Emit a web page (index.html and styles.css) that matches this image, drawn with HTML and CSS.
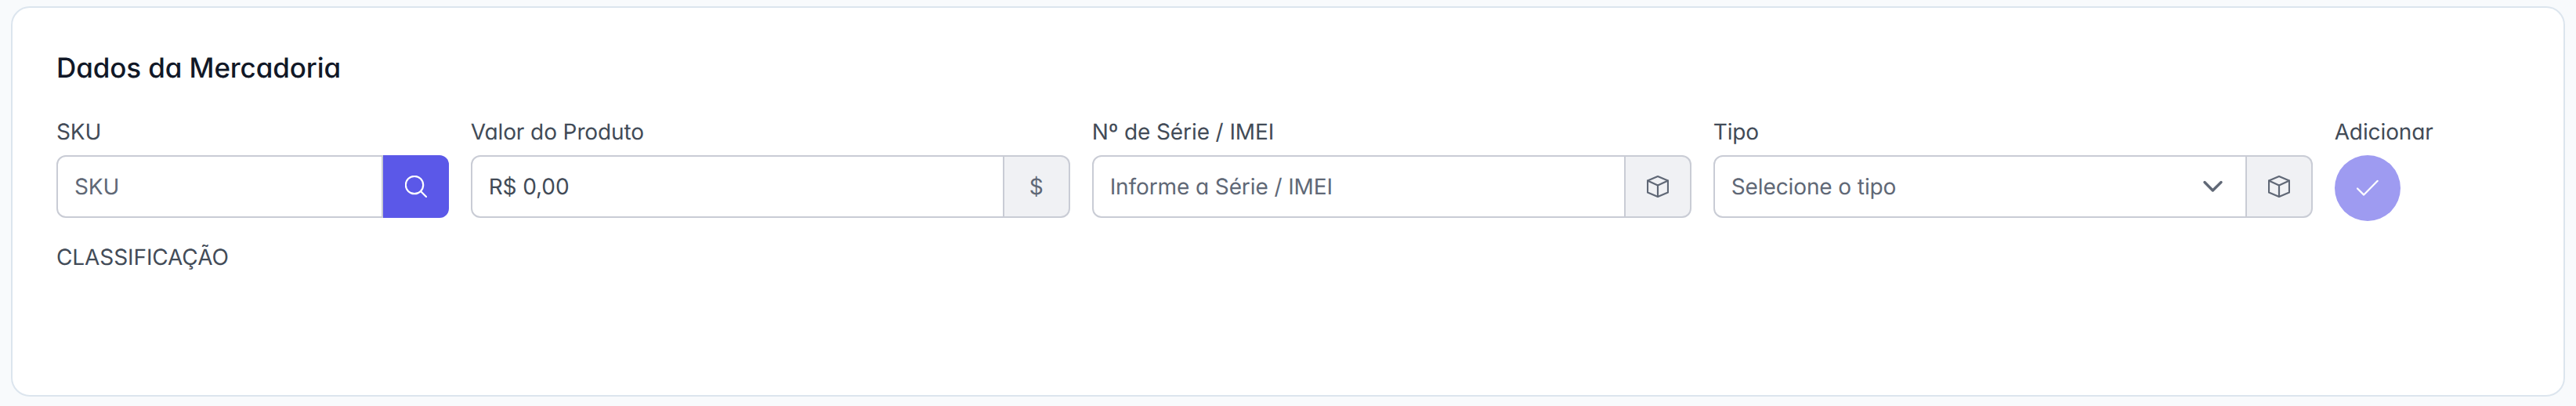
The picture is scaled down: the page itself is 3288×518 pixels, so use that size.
FILE: index.html
```html
<!DOCTYPE html>
<html lang="pt-BR">
<head>
    <meta charset="UTF-8">
    <title>Dados da Mercadoria</title>
    <link rel="stylesheet" href="styles.css">
</head>
<body>
    <div class="card">
        <h5 class="card-title">Dados da Mercadoria</h5>

        <div class="form-grid">
            <div class="field field-sm">
                <label for="sku">SKU</label>
                <div class="input-group">
                    <input type="text" id="sku" placeholder="SKU">
                    <button type="button" class="btn-search">
                        <svg class="icon" viewBox="0 0 28 28">
                            <circle cx="12" cy="12" r="11.2"/>
                            <path d="M20 20L27 27"/>
                        </svg>
                    </button>
                </div>
            </div>

            <div class="field">
                <label for="valor">Valor do Produto</label>
                <div class="input-group">
                    <input type="text" id="valor" value="R$ 0,00">
                    <span class="addon">$</span>
                </div>
            </div>

            <div class="field">
                <label for="serie">Nº de Série / IMEI</label>
                <div class="input-group">
                    <input type="text" id="serie" placeholder="Informe a Série / IMEI">
                    <span class="addon">
                        <svg class="icon" viewBox="0 0 28 28">
                            <path d="M14 1L27 6.6V21.4L14 27L1 21.4V6.6Z"/>
                            <path d="M1 6.6L14 12.4L27 6.6M14 12.4V27"/>
                        </svg>
                    </span>
                </div>
            </div>

            <div class="field">
                <label>Tipo</label>
                <div class="input-group">
                    <div class="dropdown">
                        <span class="dropdown-label">Selecione o tipo</span>
                        <svg class="icon chevron" viewBox="0 0 28 28">
                            <path d="M3 8.5L13.4 19L24 8.5"/>
                        </svg>
                    </div>
                    <span class="addon">
                        <svg class="icon" viewBox="0 0 28 28">
                            <path d="M14 1L27 6.6V21.4L14 27L1 21.4V6.6Z"/>
                            <path d="M1 6.6L14 12.4L27 6.6M14 12.4V27"/>
                        </svg>
                    </span>
                </div>
            </div>

            <div class="field field-btn">
                <label>Adicionar</label>
                <button type="button" class="btn-add" disabled>
                    <svg class="icon" viewBox="0 0 28 28">
                        <path d="M1 14.5L9.2 22.6L26.7 4.8"/>
                    </svg>
                </button>
            </div>
        </div>

        <div class="classification">CLASSIFICAÇÃO</div>
    </div>
</body>
</html>
```
FILE: styles.css
```css
* {
    box-sizing: border-box;
}
body {
    margin: 0;
    padding: 8px 14px 12px;
    height: 518px;
    background-color: #f8fafc;
    color: #424b57;
    font-family: Inter, "Liberation Sans", sans-serif;
    font-feature-settings: "cv11";
    font-size: 28px;
    line-height: 42px;
    letter-spacing: -0.1px;
    text-rendering: geometricPrecision;
}
.card {
    height: 498px;
    padding: 56px;
    background-color: #ffffff;
    border: 2px solid #dce5ee;
    border-radius: 24px;
}
.card-title {
    margin: 0 0 43px;
    color: #111827;
    font-size: 35px;
    font-weight: 500;
    line-height: 42px;
}
.form-grid {
    display: grid;
    grid-template-columns: repeat(12, 1fr);
    column-gap: 28px;
}
.field {
    grid-column: span 3;
    display: flex;
    flex-direction: column;
    align-items: stretch;
}
.field-sm {
    grid-column: span 2;
}
.field-btn {
    grid-column: span 1;
    align-items: flex-start;
}
.field label {
    margin-bottom: 13px;
    line-height: 34px;
    white-space: nowrap;
}
.input-group {
    display: flex;
    height: 80px;
}
.input-group input,
.dropdown {
    flex: 1;
    min-width: 0;
    padding: 0 21px;
    background-color: #ffffff;
    border: 2px solid #c9ccd5;
    border-radius: 12px 0 0 12px;
    color: #424b57;
    font: inherit;
    font-feature-settings: inherit;
    letter-spacing: inherit;
    text-rendering: inherit;
}
.input-group input::placeholder {
    color: #606876;
    opacity: 1;
}
.dropdown {
    display: flex;
    align-items: center;
    justify-content: space-between;
    padding-right: 27px;
    color: #606876;
}
.addon,
.btn-search {
    display: flex;
    align-items: center;
    justify-content: center;
    width: 84px;
    border-radius: 0 12px 12px 0;
}
.addon {
    background-color: #f0f1f4;
    border: 2px solid #c9ccd5;
    border-left: none;
    color: #606876;
}
.btn-search {
    padding: 0;
    background-color: #5b58e8;
    border: none;
    color: #ffffff;
}
.btn-add {
    display: flex;
    align-items: center;
    justify-content: center;
    width: 84px;
    height: 84px;
    padding: 0;
    background-color: #9e9bf1;
    border: none;
    border-radius: 50%;
    color: #ffffff;
}
.icon {
    width: 28px;
    height: 28px;
    fill: none;
    stroke: currentColor;
    stroke-width: 2.2;
    stroke-linecap: round;
    stroke-linejoin: round;
}
.chevron {
    stroke-width: 3.4;
}
.classification {
    margin-top: 25px;
}
```
